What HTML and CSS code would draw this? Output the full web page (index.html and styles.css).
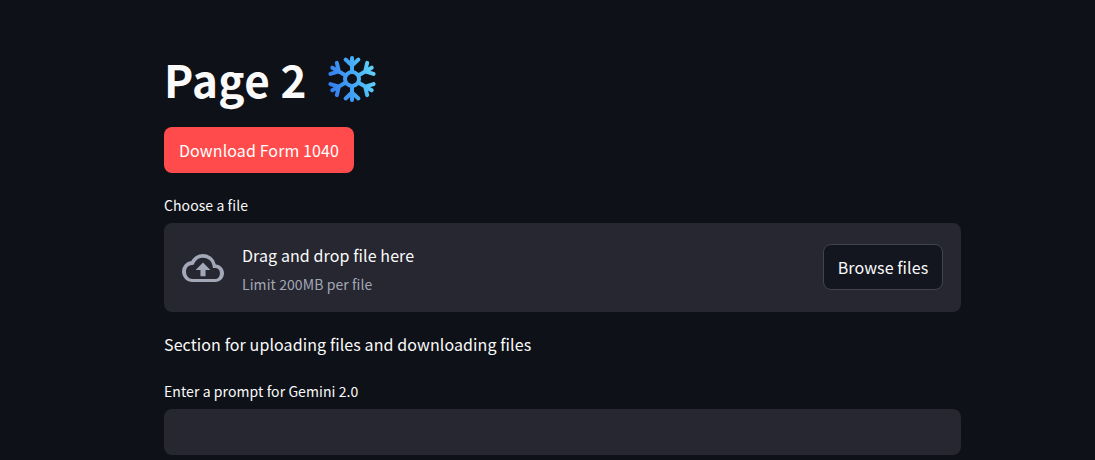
FILE: index.html
```html
<!DOCTYPE html>
<html lang="en">
<head>
<meta charset="utf-8">
<title>Page 2</title>
<link rel="stylesheet" href="styles.css">
</head>
<body>
<main class="page">
  <h1 class="title">
    <span>Page 2</span>
    <svg class="snow" viewBox="0 0 48 50" aria-hidden="true">
      <defs>
        <linearGradient id="ice" gradientUnits="userSpaceOnUse" x1="2" y1="30" x2="46" y2="20">
          <stop offset="0" stop-color="#357df0"/>
          <stop offset="0.5" stop-color="#42a6f6"/>
          <stop offset="1" stop-color="#5fd2f9"/>
        </linearGradient>
        <path id="arm" d="M24 17V3M17.600 4.500 24 10.500l6.400-6"/>
        <mask id="flake" maskUnits="userSpaceOnUse" x="0" y="0" width="48" height="50">
          <g fill="none" stroke="#fff" stroke-width="4" stroke-linecap="round" stroke-linejoin="round" transform="translate(0 1)">
            <circle cx="24" cy="24" r="7"/>
            <use href="#arm"/>
            <use href="#arm" transform="rotate(60 24 24) translate(0 -1.700)"/>
            <use href="#arm" transform="rotate(120 24 24) translate(0 -1.700)"/>
            <use href="#arm" transform="rotate(180 24 24)"/>
            <use href="#arm" transform="rotate(240 24 24) translate(0 -1.700)"/>
            <use href="#arm" transform="rotate(300 24 24) translate(0 -1.700)"/>
          </g>
        </mask>
      </defs>
      <rect width="48" height="50" fill="url(#ice)" mask="url(#flake)"/>
    </svg>
  </h1>
  <button class="btn-primary" type="button">Download Form 1040</button>
  <label class="label label-file">Choose a file</label>
  <section class="drop">
    <svg class="cloud" viewBox="0 0 24 24" aria-hidden="true">
      <path fill="#a3a8b8" d="M19.350 10.040A7.490 7.490 0 0 0 12 4C9.110 4 6.600 5.640 5.350 8.040A5.994 5.994 0 0 0 0 14c0 3.310 2.690 6 6 6h13c2.760 0 5-2.240 5-5 0-2.640-2.050-4.780-4.650-4.960zM19 18.300H6c-2.210 0-3.700-1.990-3.700-4.300 0-2.050 1.230-3.560 3.260-3.770l1.070-.11.500-.950A5.469 5.469 0 0 1 12 6.200c2.620 0 4.880 1.660 5.390 4.230l.300 1.500 1.530.110A2.980 2.980 0 0 1 21.700 15c0 1.650-1.050 3.300-2.700 3.300z"/>
      <path fill="#a3a8b8" d="M7.800 13.200h2.750v3.500h2.900v-3.500h2.750L12 8.800z"/>
    </svg>
    <div class="drop-text">
      <div class="drop-title">Drag and drop file here</div>
      <div class="drop-limit">Limit 200MB per file</div>
    </div>
    <button class="btn-browse" type="button">Browse files</button>
  </section>
  <p class="section-text">Section for uploading files and downloading files</p>
  <label class="label label-prompt">Enter a prompt for Gemini 2.0</label>
  <div class="prompt"></div>
</main>
</body>
</html>
```
FILE: styles.css
```css
* { box-sizing: border-box; }
html, body { margin: 0; height: 100%; }
body {
  background: #0e1117;
  color: #fafafa;
  font-family: "Noto Sans CJK JP", "Noto Sans", sans-serif;
  overflow: hidden;
}
.page {
  width: 797px;
  margin-left: 164px;
  padding-top: 50px;
  display: flex;
  flex-direction: column;
  align-items: stretch;
}
.title {
  margin: 0;
  height: 58px;
  display: flex;
  align-items: center;
  gap: 21px;
  font-size: 44px;
  letter-spacing: .4px;
  line-height: 58px;
  font-weight: 700;
  color: #fafafa;
}
.snow { width: 48px; height: 50px; flex: none; }
.btn-primary {
  align-self: flex-start;
  margin-top: 19px;
  width: 190px;
  height: 46px;
  border: 0;
  border-radius: 8px;
  background: #ff4b4b;
  color: #fff;
  font: 400 16px/24px "Noto Sans CJK JP", "Noto Sans", sans-serif;
  letter-spacing: .1px;
  padding: 0;
}
.label {
  display: block;
  font-size: 14px;
  line-height: 20px;
  letter-spacing: .08px;
  color: #fafafa;
}
.label-file { margin-top: 22px; }
.drop {
  margin-top: 8px;
  height: 89px;
  background: #262730;
  border-radius: 8px;
  display: flex;
  align-items: center;
  padding: 0 18px 2px 18px;
}
.cloud { width: 42px; height: 42px; flex: none; margin-top: 2px; }
.drop-text { margin-left: 18px; flex: 1; margin-top: 4px; }
.drop-title { font-size: 16px; line-height: 24px; letter-spacing: .1px; }
.drop-limit { margin-top: 7px; font-size: 14px; line-height: 20px; letter-spacing: .08px; color: #a3a8b8; }
.btn-browse {
  width: 120px;
  height: 46px;
  background: #13161e;
  border: 1px solid #41444e;
  border-radius: 8px;
  color: #fafafa;
  font: 400 16px/24px "Noto Sans CJK JP", "Noto Sans", sans-serif;
  letter-spacing: .1px;
  padding: 0;
}
.section-text {
  margin: 20px 0 0;
  font-size: 16px;
  line-height: 24px;
  letter-spacing: .1px;
}
.label-prompt { margin-top: 25px; }
.prompt {
  margin-top: 8px;
  height: 46px;
  background: #262730;
  border-radius: 8px;
}
```
